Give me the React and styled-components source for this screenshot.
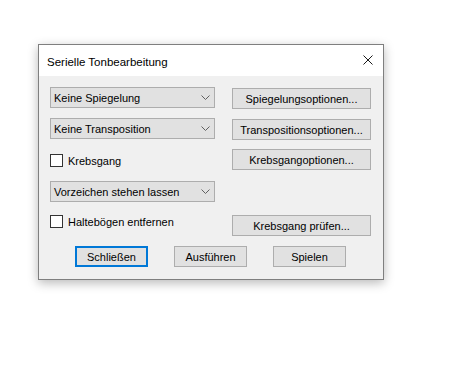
import React from "react";
import styled, { createGlobalStyle } from "styled-components";

const GlobalStyle = createGlobalStyle`
  html, body { margin: 0; padding: 0; background: #ffffff; }
  * { box-sizing: border-box; }
  body { font-family: "Liberation Sans", Arial, sans-serif; font-size: 11px; color: #000; }
`;

const Screen = styled.div`
  padding: 44px 0 0 38px;
  height: 387px;
`;

const Window = styled.div`
  width: 346px;
  border: 1px solid #7f7f7f;
  background: #f0f0f0;
  box-shadow: 0 3px 10px rgba(0, 0, 0, 0.28);
`;

const TitleBar = styled.div`
  display: flex;
  align-items: flex-start;
  height: 31px;
  background: #ffffff;
  padding-left: 8px;
`;

const Title = styled.div`
  margin-top: 10px;
  line-height: 15px;
  font-size: 11.5px;
`;

const Close = styled.svg`
  margin-left: auto;
  margin-top: 10px;
  margin-right: 10px;
  width: 10px;
  height: 10px;
`;

const Body = styled.div`
  padding: 11px 12px 12px 11px;
`;

const Columns = styled.div`
  display: flex;
  gap: 17px;
`;

const Column = styled.div`
  display: flex;
  flex-direction: column;
  width: ${(p) => p.$width}px;
`;

const Combo = styled.div`
  display: flex;
  align-items: center;
  justify-content: space-between;
  height: 21px;
  margin-top: ${(p) => p.$top || 0}px;
  padding: 0 4px 0 3px;
  border: 1px solid #adadad;
  background: #e1e1e1;
  white-space: nowrap;
`;

const Chevron = styled.svg`
  width: 9px;
  height: 5px;
  flex: none;
`;

const CheckRow = styled.label`
  display: flex;
  align-items: center;
  gap: 5px;
  height: 13px;
  margin-top: ${(p) => p.$top || 0}px;
  white-space: nowrap;
`;

const Box = styled.span`
  width: 13px;
  height: 13px;
  flex: none;
  border: 1px solid #333333;
  background: #ffffff;
`;

const Button = styled.button`
  display: flex;
  align-items: center;
  justify-content: center;
  width: ${(p) => (p.$width ? `${p.$width}px` : "100%")};
  height: 21px;
  margin: ${(p) => p.$top || 0}px 0 0 0;
  padding: 0;
  border: ${(p) => (p.$default ? "2px solid #0078d7" : "1px solid #adadad")};
  background: #e1e1e1;
  font-family: inherit;
  font-size: 11px;
  color: #000;
  white-space: nowrap;
`;

const Footer = styled.div`
  display: flex;
  justify-content: center;
  gap: 26px;
  margin-top: 10px;
`;

const ChevronIcon = () => (
  <Chevron viewBox="0 0 9 5">
    <polyline points="0.5,0.5 4.5,4.5 8.5,0.5" fill="none" stroke="#606060" strokeWidth="1" />
  </Chevron>
);

export default function App() {
  return (
    <>
      <GlobalStyle />
      <Screen>
        <Window>
          <TitleBar>
            <Title>Serielle Tonbearbeitung</Title>
            <Close viewBox="0 0 10 10">
              <path d="M0.5 0.5 L9.5 9.5 M9.5 0.5 L0.5 9.5" stroke="#1a1a1a" strokeWidth="1" fill="none" />
            </Close>
          </TitleBar>
          <Body>
            <Columns>
              <Column $width={165}>
                <Combo>
                  <span>Keine Spiegelung</span>
                  <ChevronIcon />
                </Combo>
                <Combo $top={10}>
                  <span>Keine Transposition</span>
                  <ChevronIcon />
                </Combo>
                <CheckRow $top={15}>
                  <Box />
                  <span>Krebsgang</span>
                </CheckRow>
                <Combo $top={14}>
                  <span>Vorzeichen stehen lassen</span>
                  <ChevronIcon />
                </Combo>
                <CheckRow $top={13}>
                  <Box />
                  <span>Haltebögen entfernen</span>
                </CheckRow>
              </Column>
              <Column $width={139}>
                <Button $top={1}>Spiegelungsoptionen...</Button>
                <Button $top={10}>Transpositionsoptionen...</Button>
                <Button $top={9}>Krebsgangoptionen...</Button>
                <Button $top={45}>Krebsgang prüfen...</Button>
              </Column>
            </Columns>
            <Footer>
              <Button $width={73} $default>Schließen</Button>
              <Button $width={73}>Ausführen</Button>
              <Button $width={73}>Spielen</Button>
            </Footer>
          </Body>
        </Window>
      </Screen>
    </>
  );
}
